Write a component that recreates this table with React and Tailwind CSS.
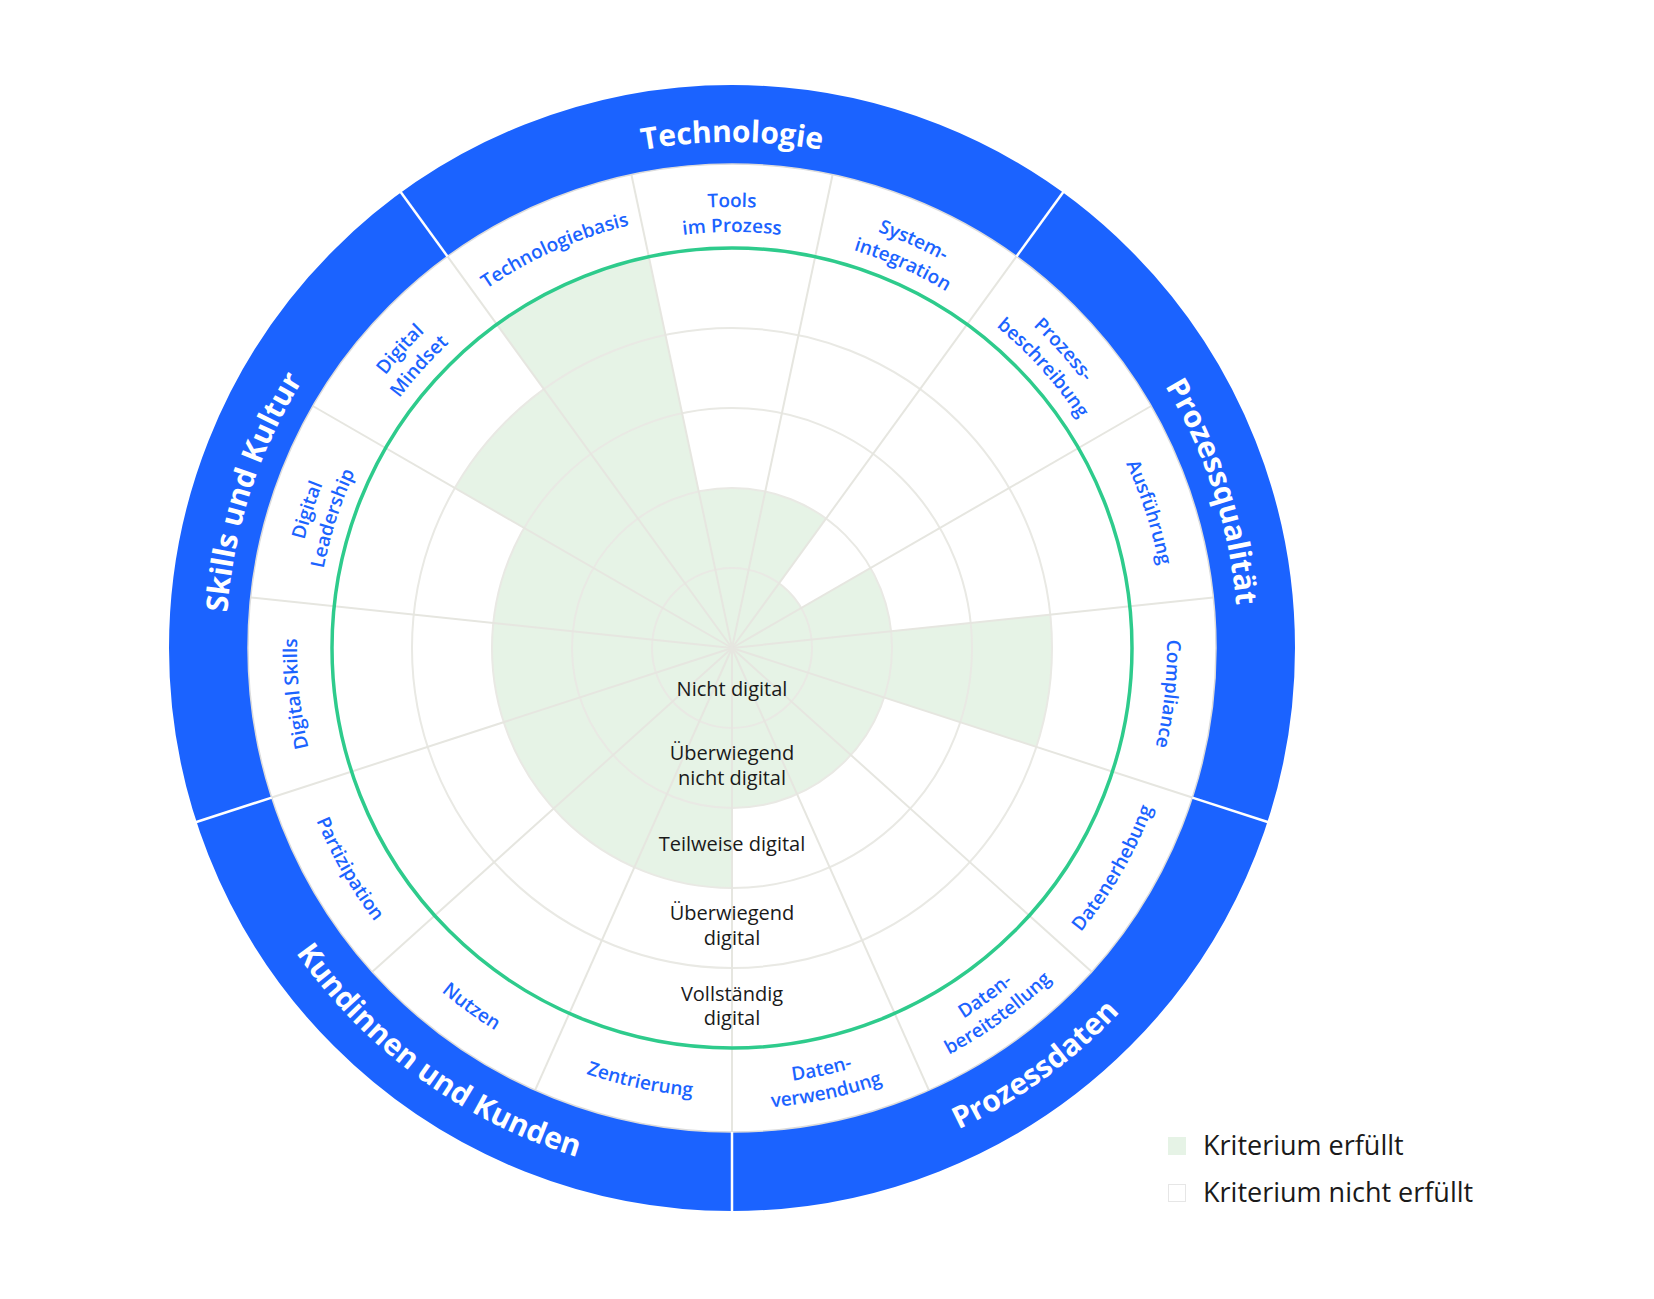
import React from 'react';

const CX = 570;
const CY = 570;
const BLUE = '#1b63ff';

// winkel im uhrzeigersinn ab 12 uhr
const pt = (deg, r) => {
  const a = (deg * Math.PI) / 180;
  return [CX + r * Math.sin(a), CY - r * Math.cos(a)];
};

const wedge = (a1, a2, r) => {
  const [x1, y1] = pt(a1, r);
  const [x2, y2] = pt(a2, r);
  return `M ${CX} ${CY} L ${x1} ${y1} A ${r} ${r} 0 0 1 ${x2} ${y2} Z`;
};

const arc = (center, r, flipped) => {
  const span = 70;
  if (flipped) {
    const [x1, y1] = pt(center + span, r);
    const [x2, y2] = pt(center - span, r);
    return `M ${x1} ${y1} A ${r} ${r} 0 0 0 ${x2} ${y2}`;
  }
  const [x1, y1] = pt(center - span, r);
  const [x2, y2] = pt(center + span, r);
  return `M ${x1} ${y1} A ${r} ${r} 0 0 1 ${x2} ${y2}`;
};

const segments = [
  { a: 0, lines: ['Tools', 'im Prozess'], level: 2 },
  { a: 24, lines: ['System-', 'integration'], level: 2 },
  { a: 48, lines: ['Prozess-', 'beschreibung'], level: 1 },
  { a: 72, lines: ['Ausführung'], level: 2 },
  { a: 96, lines: ['Compliance'], level: 4 },
  { a: 120, lines: ['Datenerhebung'], level: 2 },
  { a: 144, lines: ['Daten-', 'bereitstellung'], level: 2 },
  { a: 168, lines: ['Daten-', 'verwendung'], level: 2 },
  { a: 192, lines: ['Zentrierung'], level: 3 },
  { a: 216, lines: ['Nutzen'], level: 3 },
  { a: 240, lines: ['Partizipation'], level: 3 },
  { a: 264, lines: ['Digital Skills'], level: 3 },
  { a: 288, lines: ['Digital', 'Leadership'], level: 3 },
  { a: 312, lines: ['Digital', 'Mindset'], level: 4 },
  { a: 336, lines: ['Technologiebasis'], level: 5 },
];

const categories = [
  { a: 0, label: 'Technologie' },
  { a: 72, label: 'Prozessqualität' },
  { a: 144, label: 'Prozessdaten' },
  { a: 216, label: 'Kundinnen und Kunden' },
  { a: 288, label: 'Skills und Kultur' },
];

const levels = [
  { y: [618], lines: ['Nicht digital'] },
  { y: [682, 707], lines: ['Überwiegend', 'nicht digital'] },
  { y: [773], lines: ['Teilweise digital'] },
  { y: [842, 867], lines: ['Überwiegend', 'digital'] },
  { y: [923, 947], lines: ['Vollständig', 'digital'] },
];

const isFlipped = (a) => a > 100 && a < 260;

const labelRadii = (count, flipped) => {
  if (flipped) return count === 1 ? [450] : [437, 461];
  return count === 1 ? [435] : [441, 416];
};

function Chart() {
  const step = 80;
  return (
    <svg width="1140" height="1140" viewBox="0 0 1140 1140" className="shrink-0">
      <defs>
        {segments.map((s) => {
          const flipped = isFlipped(s.a);
          return labelRadii(s.lines.length, flipped).map((r, i) => (
            <path key={`${s.a}-${i}`} id={`seg-${s.a}-${i}`} d={arc(s.a, r, flipped)} fill="none" />
          ));
        })}
        {categories.map((c) => {
          const flipped = isFlipped(c.a);
          return <path key={c.a} id={`cat-${c.a}`} d={arc(c.a, flipped ? 532 : 506, flipped)} fill="none" />;
        })}
      </defs>

      {/* erfüllte kriterien */}
      {segments.map((s) => (
        <path key={s.a} d={wedge(s.a - 12, s.a + 12, s.level * step)} fill="#e6f3e6" />
      ))}

      {/* raster */}
      {[1, 2, 3, 4].map((k) => (
        <circle key={k} cx={CX} cy={CY} r={k * step} fill="none" stroke="#e9e9e4" strokeWidth="2" />
      ))}
      {segments.map((s) => {
        const [x, y] = pt(s.a + 12, 484);
        return <line key={s.a} x1={CX} y1={CY} x2={x} y2={y} stroke="#e6e6e0" strokeWidth="2" />;
      })}
      <circle cx={CX} cy={CY} r={400} fill="none" stroke="#2ecb8c" strokeWidth="3.5" />

      {/* aeusserer ring */}
      <circle cx={CX} cy={CY} r={523.5} fill="none" stroke={BLUE} strokeWidth="79" />
      <circle cx={CX} cy={CY} r={484} fill="none" stroke="#dcdcdc" strokeWidth="1.5" />
      {[36, 108, 180, 252, 324].map((a) => {
        const [x1, y1] = pt(a, 484);
        const [x2, y2] = pt(a, 564);
        return <line key={a} x1={x1} y1={y1} x2={x2} y2={y2} stroke="#ffffff" strokeWidth="2.5" />;
      })}

      {segments.map((s) =>
        s.lines.map((line, i) => (
          <text key={`${s.a}-${i}`} fill={BLUE} fontSize="19" fontWeight="600">
            <textPath href={`#seg-${s.a}-${i}`} startOffset="50%" textAnchor="middle">
              {line}
            </textPath>
          </text>
        ))
      )}

      {categories.map((c) => (
        <text key={c.a} fill="#ffffff" fontSize="30" fontWeight="700">
          <textPath href={`#cat-${c.a}`} startOffset="50%" textAnchor="middle">
            {c.label}
          </textPath>
        </text>
      ))}

      {levels.map((l, i) =>
        l.lines.map((line, j) => (
          <text key={`${i}-${j}`} x={CX} y={l.y[j]} textAnchor="middle" fontSize="20" fill="#1a1a1a">
            {line}
          </text>
        ))
      )}
    </svg>
  );
}

function Legend() {
  return (
    <div className="mb-[3px] -ml-[134px] flex flex-col text-[27px] leading-[47px] text-[#1a1a1a]">
      <div className="flex items-start gap-[17px]">
        <span className="mt-[16px] h-[18px] w-[18px] bg-[#e6f3e6]" />
        <span>Kriterium erfüllt</span>
      </div>
      <div className="flex items-start gap-[17px]">
        <span className="mt-[16px] h-[18px] w-[18px] border border-[#e6e6e6] bg-white" />
        <span>Kriterium nicht erfüllt</span>
      </div>
    </div>
  );
}

export default function App() {
  return (
    <div className="min-h-[1299px] w-[1654px] bg-white font-['Open_Sans',sans-serif]">
      <div className="flex items-end pl-[162px] pt-[78px]">
        <Chart />
        <Legend />
      </div>
    </div>
  );
}
